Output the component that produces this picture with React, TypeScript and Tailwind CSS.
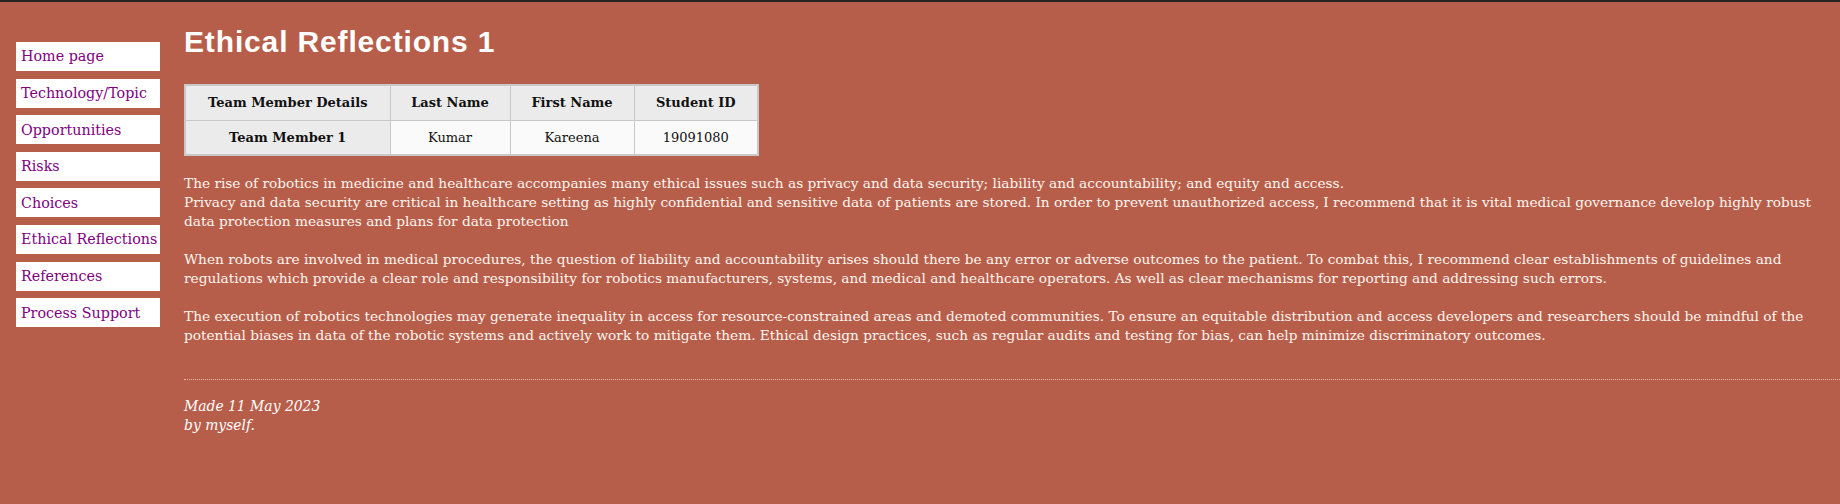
import React from "react";

const navItems = [
  "Home page",
  "Technology/Topic",
  "Opportunities",
  "Risks",
  "Choices",
  "Ethical Reflections",
  "References",
  "Process Support",
];

export default function App() {
  return (
    <div className="min-h-[504px] w-full bg-[#b75e4b] border-t-2 border-[#2a2323] flex font-['DejaVu_Serif',Georgia,serif]">
      <nav className="w-[184px] shrink-0 pl-4 pt-[40px]">
        <ul className="flex flex-col gap-[7.6px]">
          {navItems.map((item) => (
            <li key={item} className="w-[144px] h-[29px] bg-white flex items-center pl-[5px]">
              <a href="#" className="text-[#800080] text-[14.3px] leading-none">
                {item}
              </a>
            </li>
          ))}
        </ul>
      </nav>
      <main className="flex-1 min-w-0">
        <h1 className="font-['Liberation_Sans',Arial,sans-serif] font-bold text-white text-[30px] tracking-[0.85px] leading-[34px] mt-[23px]">
          Ethical Reflections 1
        </h1>
        <table className="mt-[25px] border-collapse border-2 border-[#c8c8c8] text-[13px] text-[#111]">
          <thead>
            <tr className="h-[35px] bg-[#ebebeb]">
              <th className="w-[205px] border border-[#c8c8c8] font-bold">Team Member Details</th>
              <th className="w-[120px] border border-[#c8c8c8] font-bold">Last Name</th>
              <th className="w-[124px] border border-[#c8c8c8] font-bold">First Name</th>
              <th className="w-[124px] border border-[#c8c8c8] font-bold">Student ID</th>
            </tr>
          </thead>
          <tbody>
            <tr className="h-[35px]">
              <th className="border border-[#c8c8c8] bg-[#ebebeb] font-bold">Team Member 1</th>
              <td className="border border-[#c8c8c8] bg-[#fafafa] text-center">Kumar</td>
              <td className="border border-[#c8c8c8] bg-[#fafafa] text-center">Kareena</td>
              <td className="border border-[#c8c8c8] bg-[#fafafa] text-center">19091080</td>
            </tr>
          </tbody>
        </table>
        <div className="mt-[18px] text-[#fdf5ee] text-[13.7px] leading-[19px] pr-4">
          <p>
            The rise of robotics in medicine and healthcare accompanies many ethical issues such as privacy and data security; liability and accountability; and equity and access.
            <br />
            Privacy and data security are critical in healthcare setting as highly confidential and sensitive data of patients are stored. In order to prevent unauthorized access, I recommend that it is vital medical governance develop highly robust
            <br />
            data protection measures and plans for data protection
          </p>
          <p className="mt-[19px]">
            When robots are involved in medical procedures, the question of liability and accountability arises should there be any error or adverse outcomes to the patient. To combat this, I recommend clear establishments of guidelines and
            <br />
            regulations which provide a clear role and responsibility for robotics manufacturers, systems, and medical and healthcare operators. As well as clear mechanisms for reporting and addressing such errors.
          </p>
          <p className="mt-[19px]">
            The execution of robotics technologies may generate inequality in access for resource-constrained areas and demoted communities. To ensure an equitable distribution and access developers and researchers should be mindful of the
            <br />
            potential biases in data of the robotic systems and actively work to mitigate them. Ethical design practices, such as regular audits and testing for bias, can help minimize discriminatory outcomes.
          </p>
        </div>
        <hr className="mt-[34px] border-0 border-t border-dotted border-[#e3b7ab]" />
        <footer className="mt-[17px] italic text-white text-[13.9px] leading-[19px]">
          Made 11 May 2023
          <br />
          by myself.
        </footer>
      </main>
    </div>
  );
}
